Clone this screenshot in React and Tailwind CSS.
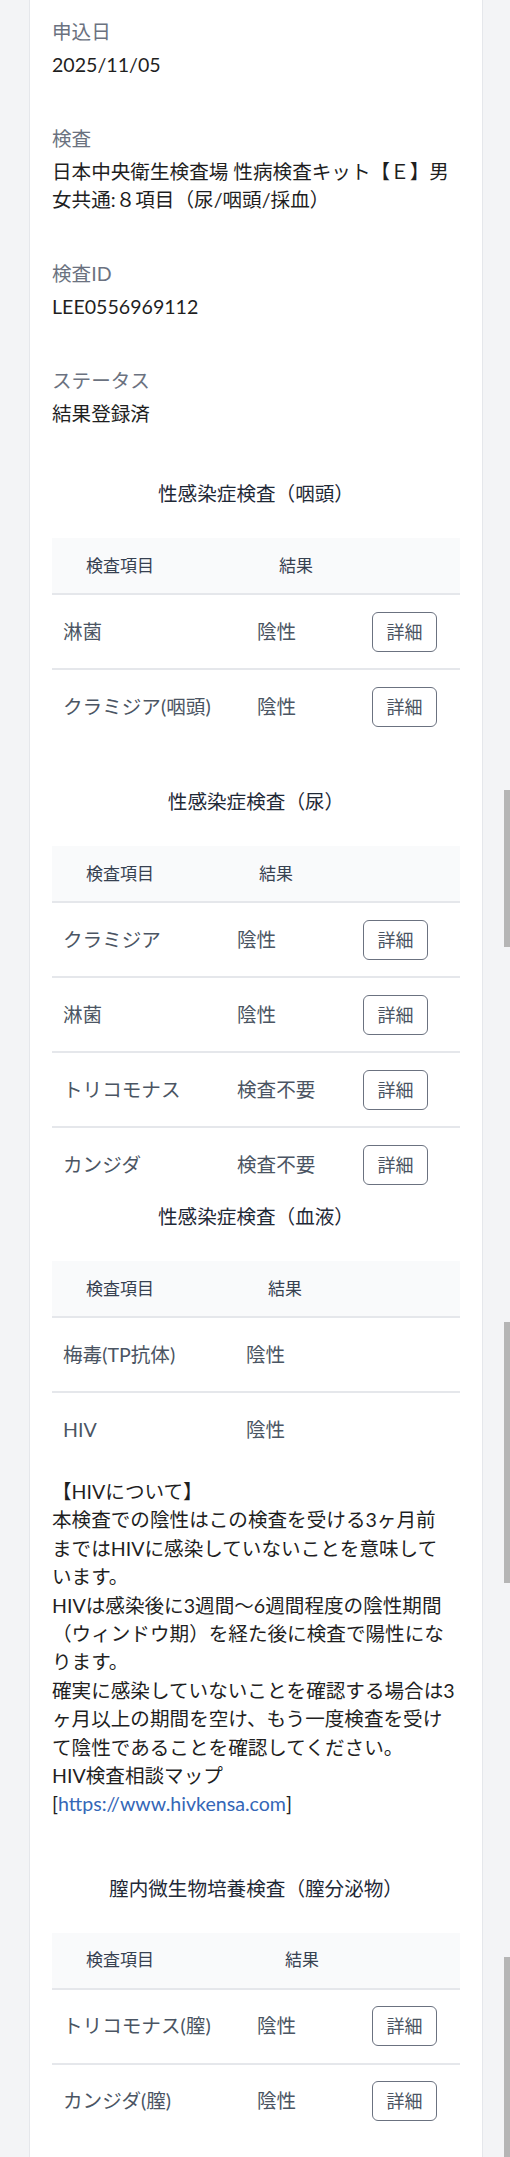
import React from "react";

const fields = [
  { label: "申込日", value: ["2025/11/05"] },
  {
    label: "検査",
    value: ["日本中央衛生検査場 性病検査キット【Ｅ】男", "女共通:８項目（尿/咽頭/採血）"],
  },
  { label: "検査ID", value: ["LEE0556969112"] },
  { label: "ステータス", value: ["結果登録済"] },
];

const DetailButton = () => (
  <button className="h-[40px] w-[65px] rounded-md border-[1.5px] border-[#6b7280] bg-white text-[18px] leading-none text-[#4b5563]">
    詳細
  </button>
);

const ResultTable = ({ cols, resultPad, rows, withButton }) => (
  <div>
    <div
      className={`grid ${cols} box-content h-[55px] items-center border-b-2 border-[#e5e7eb] bg-[#f9fafb] text-[17px] text-[#374151]`}
    >
      <div className="pl-[34px]">検査項目</div>
      <div className={resultPad}>結果</div>
      {withButton && <div />}
    </div>
    <div className="divide-y-2 divide-[#e5e7eb]">
      {rows.map(([name, result]) => (
        <div
          key={name}
          className={`grid ${cols} box-content h-[73px] items-center text-[#4b5563]`}
        >
          <div className="pl-[11px] whitespace-nowrap">{name}</div>
          <div className="pl-[11px] whitespace-nowrap">{result}</div>
          {withButton && (
            <div className="pl-[11px]">
              <DetailButton />
            </div>
          )}
        </div>
      ))}
    </div>
  </div>
);

const SectionTitle = ({ children }) => (
  <h2 className="mb-[30px] text-center text-[19.6px] leading-[28px] text-[#1f2937]">
    {children}
  </h2>
);

export default function App() {
  return (
    <div className="relative h-[2157px] w-[510px] overflow-hidden bg-[#f3f4f6] font-['Lato','Noto_Sans_CJK_JP',sans-serif] text-[19.6px] leading-[28px]">
      <div className="ml-[29px] h-full w-[454px] border-x border-[#e5e7eb] bg-white px-[22px] pt-[18px]">
        {/* Order summary */}
        {fields.map((f, i) => (
          <div key={f.label} className={i === fields.length - 1 ? "mb-[52px]" : "mb-[46px]"}>
            <div className="mb-[5px] text-[#6b7280]">{f.label}</div>
            <div className="text-[#1f1f1f]">
              {f.value.map((line, j) => (
                <div key={j} className="whitespace-nowrap">
                  {line}
                </div>
              ))}
            </div>
          </div>
        ))}

        <section className="mb-[45px]">
          <SectionTitle>性感染症検査（咽頭）</SectionTitle>
          <ResultTable
            cols="grid-cols-[194px_115px_1fr]"
            resultPad="pl-[33px]"
            withButton
            rows={[
              ["淋菌", "陰性"],
              ["クラミジア(咽頭)", "陰性"],
            ]}
          />
        </section>

        <section className="mb-[2px]">
          <SectionTitle>性感染症検査（尿）</SectionTitle>
          <ResultTable
            cols="grid-cols-[174px_126px_1fr]"
            resultPad="pl-[33px]"
            withButton
            rows={[
              ["クラミジア", "陰性"],
              ["淋菌", "陰性"],
              ["トリコモナス", "検査不要"],
              ["カンジダ", "検査不要"],
            ]}
          />
        </section>

        <section className="mb-[12px]">
          <SectionTitle>性感染症検査（血液）</SectionTitle>
          <ResultTable
            cols="grid-cols-[183px_1fr]"
            resultPad="pl-[33px]"
            rows={[
              ["梅毒(TP抗体)", "陰性"],
              ["HIV", "陰性"],
            ]}
          />
        </section>

        <p className="mb-[56px] whitespace-nowrap leading-[28.4px] text-[#1f1f1f]">
          【HIVについて】
          <br />
          本検査での陰性はこの検査を受ける3ヶ月前
          <br />
          まではHIVに感染していないことを意味して
          <br />
          います。
          <br />
          HIVは感染後に3週間〜6週間程度の陰性期間
          <br />
          （ウィンドウ期）を経た後に検査で陽性にな
          <br />
          ります。
          <br />
          確実に感染していないことを確認する場合は3
          <br />
          ヶ月以上の期間を空け、もう一度検査を受け
          <br />
          て陰性であることを確認してください。
          <br />
          HIV検査相談マップ
          <br />[
          <a href="#" className="text-[#3567b7]">
            https://www.hivkensa.com
          </a>
          ]
        </p>

        <section>
          <SectionTitle>膣内微生物培養検査（膣分泌物）</SectionTitle>
          <ResultTable
            cols="grid-cols-[194px_115px_1fr]"
            resultPad="pl-[39px]"
            withButton
            rows={[
              ["トリコモナス(膣)", "陰性"],
              ["カンジダ(膣)", "陰性"],
            ]}
          />
        </section>
      </div>

      {/* scrollbar thumbs captured in the stitched screenshot */}
      <div className="absolute right-0 top-[790px] h-[157px] w-[6px] bg-[#b5b5b5]" />
      <div className="absolute right-0 top-[1322px] h-[261px] w-[6px] bg-[#b5b5b5]" />
      <div className="absolute right-0 top-[1957px] h-[200px] w-[6px] bg-[#b5b5b5]" />
    </div>
  );
}
